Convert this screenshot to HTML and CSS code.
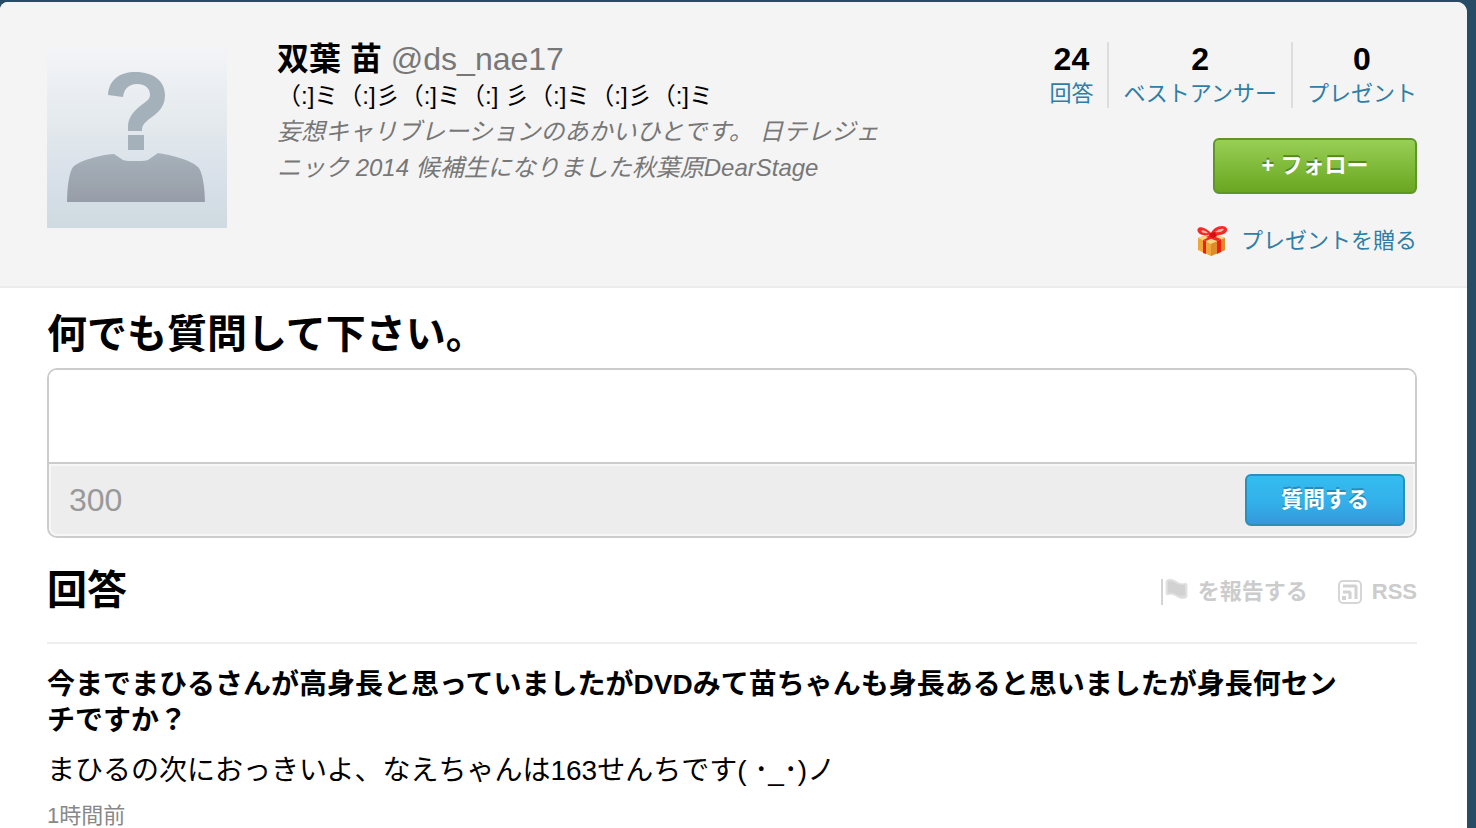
FILE: index.html
```html
<!DOCTYPE html>
<html lang="ja">
<head>
<meta charset="utf-8">
<title>双葉 苗 @ds_nae17</title>
<link rel="stylesheet" href="styles.css">
</head>
<body>
<main class="page">
  <header class="profile">
    <svg class="avatar" viewBox="0 0 180 180" role="img" aria-label="双葉 苗">
      <defs>
        <linearGradient id="sky" x1="0" y1="0" x2="0" y2="1">
          <stop offset="0" stop-color="#f3f4f8"/>
          <stop offset=".4" stop-color="#e4eaed"/>
          <stop offset=".75" stop-color="#d7dfe9"/>
          <stop offset="1" stop-color="#cfdbe0"/>
        </linearGradient>
        <linearGradient id="body" x1="0" y1="0" x2="0" y2="1">
          <stop offset="0" stop-color="#a6b1ba"/>
          <stop offset="1" stop-color="#979da8"/>
        </linearGradient>
      </defs>
      <rect width="180" height="180" fill="url(#sky)"/>
      <path d="M61 47C62 32 72 24 89 24c17 0 29 9 29 23 0 11-6 17-13 22-7 5-10 8-10 13v1H81v-4c0-8 4-14 11-20 6-5 11-7 11-12 0-7-5-11-13-11-8 0-13 5-14 13z" fill="#a5b1ba"/>
      <rect x="81" y="87" width="16" height="15" fill="#a5b1ba"/>
      <path d="M20 154C20 141 22 124 26 119 32 113 52 107 67 106l9 6q3 1 6 1h12q4 0 7-1l10-7c13 2 33 7 40 14 5 5 7 23 7 35z" fill="url(#body)"/>
    </svg>
    <div class="intro">
      <h1 class="name">双葉 苗 <span class="handle">@ds_nae17</span></h1>
      <p class="status">（:]ミ（:]彡（:]ミ（:] 彡（:]ミ（:]彡（:]ミ</p>
      <p class="bio">妄想キャリブレーションのあかいひとです。 日テレジェニック 2014 候補生になりました秋葉原DearStage</p>
    </div>
    <div class="side">
      <ul class="stats">
        <li><a href="#answers"><b>24</b>回答</a></li>
        <li><a href="#best"><b>2</b>ベストアンサー</a></li>
        <li><a href="#gifts"><b>0</b>プレゼント</a></li>
      </ul>
      <button class="btn follow" type="button">+ フォロー</button>
      <a class="gift" href="#gift">
        <svg class="gift-icon" viewBox="0 0 32 32" aria-hidden="true">
          <path d="M2 13l13-5 14 5v12l-14 6-13-6z" fill="#efa63a"/>
          <path d="M2 13l13-4 14 4-14 6z" fill="#f9d583"/>
          <path d="M15 19l14-6v12l-14 6z" fill="#dc8d27"/>
          <path d="M7 15l3 1v13l-3-1zm14 1l4-2v13l-4 2z" fill="#ef1c18"/>
          <path d="M7 15l11-5 3 1-11 5zm3-3l4-2 11 4-4 2z" fill="#ed2a24"/>
          <path d="M15 9C11 11 4 11 2 7 0 3 4 1 8 3c3 1 5 3 7 5 2-4 6-7 11-7 4 0 6 3 5 5-2 4-9 5-14 4z" fill="#f52a27"/>
          <path d="M5 6q3-2 7 2-5 1-7-2zm14 1q4-4 9-3-2 4-9 3z" fill="#f8b2ac"/>
          <path d="M14 8l5-1 2 4-4 2-4-2z" fill="#d40f15"/>
        </svg>
        プレゼントを贈る
      </a>
    </div>
  </header>

  <section class="content">
    <h2 class="title"><label for="question">何でも質問して下さい。</label></h2>
    <form class="ask">
      <textarea id="question" class="ask-text"></textarea>
      <div class="ask-bar">
        <span class="count">300</span>
        <button class="btn submit" type="button">質問する</button>
      </div>
    </form>

    <div class="list-head" id="answers">
      <h2 class="title">回答</h2>
      <nav class="tools">
        <a href="#report">
          <svg class="flag" viewBox="0 0 28 28" aria-hidden="true">
            <path d="M1 1h2v26H1z" fill="#d4d4d4"/>
            <path d="M7 2c4-2 7 0 10 2s6 2 9 1l1 1v13c-4 3-8 1-11-1s-5-2-9-1l-1-1V3z" fill="#dcdcdc" stroke="#e6e6e6"/>
            <path d="M8 4c4-1 6 0 9 2 2 1 5 1 8 1v10c-3 1-6 1-9-1-3-1-5-2-8-1z" fill="#d2d2d2"/>
          </svg>
          を報告する
        </a>
        <a href="#rss">
          <svg class="rss" viewBox="0 0 24 24" aria-hidden="true" fill="none">
            <rect x="1" y="1" width="22" height="22" rx="4" stroke="#d6d6d6" stroke-width="2"/>
            <path d="M5 6h12q1 0 1 1v12M5 12h6q1 0 1 1v6" stroke="#d2d2d2" stroke-width="3"/>
            <path d="M4 16h4v4H4z" fill="#d2d2d2"/>
          </svg>
          RSS
        </a>
      </nav>
    </div>

    <article class="answer">
      <h3 class="question">今までまひるさんが高身長と思っていましたがDVDみて苗ちゃんも身長あると思いましたが身長何センチですか？</h3>
      <p class="reply">まひるの次におっきいよ、なえちゃんは163せんちです( ･_･)ノ</p>
      <a class="time" href="#time">1時間前</a>
    </article>
  </section>
</main>
</body>
</html>
```
FILE: styles.css
```css
* { box-sizing: border-box; }

body {
  margin: 0;
  padding: 2px 9px 0 0;
  background: #274c66;
  color: #000;
  font-family: "Liberation Sans", "Noto Sans CJK JP", sans-serif;
  overflow: hidden;
}

h1, h2, h3, p, ul { margin: 0; padding: 0; }
a { color: #2e7ea7; text-decoration: none; }

.page {
  min-height: 100vh;
  background: #fff;
  border-radius: 8px 10px 0 0;
  overflow: hidden;
}

.profile {
  display: flex;
  align-items: flex-start;
  padding: 38px 50px 28px 47px;
  background: #f4f4f4;
  border-bottom: 2px solid #ececec;
}

.avatar {
  flex: none;
  width: 180px;
  height: 180px;
  margin: 8px 50px 0 0;
}

.intro { flex: 0 1 620px; }
.name { font-size: 32px; line-height: 38px; }
.handle { color: #777; font-weight: 400; }
.status { font-size: 24px; line-height: 36px; }
.bio { color: #777; font-size: 24px; font-style: italic; line-height: 36px; }

.side {
  display: flex;
  flex: none;
  flex-direction: column;
  align-items: flex-end;
  margin-left: auto;
}

.stats {
  display: flex;
  padding-top: 2px;
  list-style: none;
}
.stats li {
  padding: 0 14px;
  border-right: 2px solid #ddd;
}
.stats li:last-child { padding-right: 0; border-right: 0; }
.stats a {
  display: block;
  font-size: 22px;
  line-height: 28px;
  text-align: center;
}
.stats b {
  display: block;
  margin-bottom: 4px;
  color: #000;
  font-size: 32px;
  line-height: 34px;
}

.btn {
  border: 2px solid;
  border-radius: 6px;
  color: #fff;
  font: bold 22px/32px "Liberation Sans", "Noto Sans CJK JP", sans-serif;
}
.follow {
  width: 204px;
  height: 56px;
  margin-top: 30px;
  border-color: #609527;
  background: linear-gradient(#98cf55, #69a620);
  text-shadow: 0 -2px 0 #558a20;
}
.submit {
  width: 160px;
  height: 52px;
  border-color: #2a8fb9;
  background: linear-gradient(#33bdf0, #33b0ea 55%, #3598da);
  text-shadow: 0 -2px 0 #298cb8;
}

.gift {
  display: flex;
  align-items: center;
  gap: 13px;
  margin-top: 30px;
  font-size: 22px;
  line-height: 34px;
}
.gift-icon { width: 32px; height: 32px; }

.content { padding: 22px 50px 0 47px; }
.title { font-size: 40px; line-height: 48px; }

.ask {
  margin-top: 10px;
  border: 2px solid #ccc;
  border-radius: 10px;
  overflow: hidden;
}
.ask-text {
  display: block;
  width: 100%;
  height: 92px;
  padding: 10px 20px;
  border: 0;
  outline: 0;
  background: #fff;
  font: 28px/36px "Liberation Sans", "Noto Sans CJK JP", sans-serif;
  resize: none;
}
.ask-bar {
  display: flex;
  align-items: center;
  justify-content: space-between;
  height: 74px;
  padding: 0 10px 0 20px;
  border-top: 2px solid #ccc;
  border-radius: 0 0 8px 8px;
  background: #ededed;
  box-shadow: inset 0 0 0 2px #f7f7f7;
}
.count { color: #999; font-size: 32px; }

.list-head {
  display: flex;
  align-items: center;
  justify-content: space-between;
  margin-top: 28px;
  padding-bottom: 28px;
  border-bottom: 2px solid #eee;
}
.tools { display: flex; gap: 30px; padding-top: 4px; }
.tools a {
  display: flex;
  align-items: center;
  gap: 10px;
  color: #ccc;
  font-size: 22px;
  font-weight: bold;
  line-height: 32px;
}
.flag { width: 28px; height: 28px; }
.rss { width: 24px; height: 24px; }

.answer { padding: 23px 80px 0 0; }
.question { font-size: 28px; line-height: 36px; }
.reply { margin-top: 14px; font-size: 28px; line-height: 36px; }
.time { display: block; margin-top: 11px; color: #888; font-size: 22px; line-height: 32px; }
```
